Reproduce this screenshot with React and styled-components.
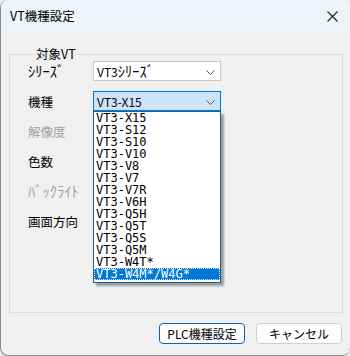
import React from 'react';
import styled, { createGlobalStyle } from 'styled-components';

const GlobalStyle = createGlobalStyle`
    html, body {
        margin: 0;
        padding: 0;
        background: #e9ecef;
    }
    body {
        font-family: "Noto Sans CJK JP", "Noto Sans", sans-serif;
        font-size: 12px;
        color: #000;
    }
`;

const Window = styled.div`
    width: 350px;
    height: 356px;
    box-sizing: border-box;
    border-left: 1px solid #8a8a8a;
    border-bottom: 1px solid #8a8a8a;
    border-radius: 8px;
    background: #f0f0f0;
    overflow: hidden;
    display: flex;
    flex-direction: column;
`;

const TitleBar = styled.div`
    height: 31px;
    flex: none;
    background: #eef3f9;
    display: flex;
    align-items: center;
    justify-content: space-between;
    padding: 0 12px 0 9px;
    font-size: 12.5px;
`;

const CloseIcon = styled.svg`
    width: 11px;
    height: 11px;
    margin-top: 1px;
`;

const Body = styled.div`
    flex: 1;
    display: flex;
    flex-direction: column;
    padding: 16px 7px 0 8px;
`;

const GroupBox = styled.fieldset`
    margin: 0;
    height: 266px;
    box-sizing: border-box;
    border: 1px solid #dcdcdc;
    padding: 0 0 0 18px;
    position: relative;
    display: flex;
    flex-direction: column;
    gap: 10px;
`;

const Legend = styled.legend`
    padding: 0 2px;
    margin-left: 6px;
    font-size: 12.5px;
    line-height: 14px;
`;

const Row = styled.div`
    display: flex;
    align-items: center;
    height: 20px;
`;

const Label = styled.div`
    width: 65px;
    font-size: 12.5px;
    color: ${(p) => (p.disabled ? '#a0a0a0' : '#000')};
`;

const Kana = styled.span`
    font-size: 14.5px;
    line-height: 14px;
`;

const Select = styled.div`
    position: relative;
    width: 128px;
    height: 20px;
    box-sizing: border-box;
    border: 1px solid ${(p) => (p.active ? '#0078d7' : '#c8c8c8')};
    background: ${(p) => (p.active ? '#cce4f7' : '#fff')};
    display: flex;
    align-items: center;
    justify-content: space-between;
    padding: 0 5px 0 3px;
    font-size: 12px;
`;

const Chevron = styled.svg`
    width: 9px;
    height: 5px;
    margin-top: 2px;
`;

const List = styled.div`
    position: absolute;
    left: -1px;
    top: 19px;
    width: 128px;
    box-sizing: border-box;
    border: 1px solid #1f5f9c;
    background: #fff;
    box-shadow: 3px 3px 2px rgba(0, 0, 0, 0.35);
    z-index: 5;
    padding-bottom: 2px;
`;

const Item = styled.div`
    height: 12px;
    line-height: 12px;
    padding: 0 2px 0 2px;
    font-family: "DejaVu Sans Mono", "Liberation Mono", monospace;
    font-size: 12px;
    white-space: nowrap;
    overflow: hidden;
    box-sizing: border-box;
    ${(p) =>
        p.selected &&
        `
        background: #0078d7;
        color: #fff;
        outline: 1px dotted #ddeeff;
        outline-offset: -1px;
    `}
`;

const Footer = styled.div`
    display: flex;
    justify-content: flex-end;
    gap: 11px;
    padding: 10px 1px 0 0;
`;

const Button = styled.button`
    width: 86px;
    height: 21px;
    box-sizing: border-box;
    border: 1px solid ${(p) => (p.primary ? '#0067c0' : '#d0d0d0')};
    border-radius: 4px;
    background: #fdfdfd;
    font-family: "Noto Sans CJK JP", "Noto Sans", sans-serif;
    font-size: 12px;
    padding: 0;
    color: #000;
`;

const models = [
    'VT3-X15',
    'VT3-S12',
    'VT3-S10',
    'VT3-V10',
    'VT3-V8',
    'VT3-V7',
    'VT3-V7R',
    'VT3-V6H',
    'VT3-Q5H',
    'VT3-Q5T',
    'VT3-Q5S',
    'VT3-Q5M',
    'VT3-W4T*',
    'VT3-W4M*/W4G*',
];

const Arrow = () => (
    <Chevron viewBox="0 0 9 5">
        <path d="M0.5 0.5 L4.5 4.5 L8.5 0.5" fill="none" stroke="#555" strokeWidth="1" />
    </Chevron>
);

export default function App() {
    return (
        <>
            <GlobalStyle />
            <Window>
                <TitleBar>
                    <span>VT機種設定</span>
                    <CloseIcon viewBox="0 0 11 11">
                        <path d="M0.5 0.5 L10.5 10.5 M10.5 0.5 L0.5 10.5" stroke="#222" strokeWidth="1.1" />
                    </CloseIcon>
                </TitleBar>
                <Body>
                    <GroupBox>
                        <Legend>対象VT</Legend>
                        <Row>
                            <Label><Kana>ｼﾘｰｽﾞ</Kana></Label>
                            <Select>
                                <span>VT3<Kana>ｼﾘｰｽﾞ</Kana></span>
                                <Arrow />
                            </Select>
                        </Row>
                        <Row>
                            <Label>機種</Label>
                            <Select active>
                                <span>VT3-X15</span>
                                <Arrow />
                                <List>
                                    {models.map((m, i) => (
                                        <Item key={m} selected={i === models.length - 1}>
                                            {m}
                                        </Item>
                                    ))}
                                </List>
                            </Select>
                        </Row>
                        <Row>
                            <Label disabled>解像度</Label>
                        </Row>
                        <Row>
                            <Label>色数</Label>
                        </Row>
                        <Row>
                            <Label disabled><Kana>ﾊﾞｯｸﾗｲﾄ</Kana></Label>
                        </Row>
                        <Row>
                            <Label>画面方向</Label>
                        </Row>
                    </GroupBox>
                    <Footer>
                        <Button primary>PLC機種設定</Button>
                        <Button>キャンセル</Button>
                    </Footer>
                </Body>
            </Window>
        </>
    );
}
